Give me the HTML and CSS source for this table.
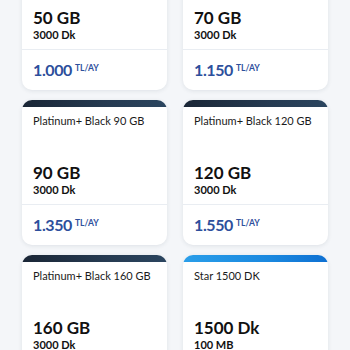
FILE: index.html
```html
<!DOCTYPE html>
<html lang="tr">
<head>
<meta charset="utf-8">
<link rel="stylesheet" href="styles.css">
</head>
<body>
<div class="grid">
  <div class="card">
    <div class="strip dark"></div>
    <div class="body">
      <div class="title">Platinum+ Black 50 GB</div>
      <div class="amounts">
        <div class="main">50 GB</div>
        <div class="sub">3000 Dk</div>
      </div>
    </div>
    <div class="price">1.000<sup>TL/AY</sup></div>
  </div>
  <div class="card">
    <div class="strip dark"></div>
    <div class="body">
      <div class="title">Platinum+ Black 70 GB</div>
      <div class="amounts">
        <div class="main">70 GB</div>
        <div class="sub">3000 Dk</div>
      </div>
    </div>
    <div class="price">1.150<sup>TL/AY</sup></div>
  </div>
  <div class="card">
    <div class="strip dark"></div>
    <div class="body">
      <div class="title">Platinum+ Black 90 GB</div>
      <div class="amounts">
        <div class="main">90 GB</div>
        <div class="sub">3000 Dk</div>
      </div>
    </div>
    <div class="price">1.350<sup>TL/AY</sup></div>
  </div>
  <div class="card">
    <div class="strip dark"></div>
    <div class="body">
      <div class="title">Platinum+ Black 120 GB</div>
      <div class="amounts">
        <div class="main">120 GB</div>
        <div class="sub">3000 Dk</div>
      </div>
    </div>
    <div class="price">1.550<sup>TL/AY</sup></div>
  </div>
  <div class="card">
    <div class="strip dark"></div>
    <div class="body">
      <div class="title">Platinum+ Black 160 GB</div>
      <div class="amounts">
        <div class="main">160 GB</div>
        <div class="sub">3000 Dk</div>
      </div>
    </div>
    <div class="price">1.750<sup>TL/AY</sup></div>
  </div>
  <div class="card">
    <div class="strip blue"></div>
    <div class="body">
      <div class="title">Star 1500 DK</div>
      <div class="amounts">
        <div class="main">1500 Dk</div>
        <div class="sub">100 MB</div>
      </div>
    </div>
    <div class="price">250<sup>TL/AY</sup></div>
  </div>
</div>
</body>
</html>
```
FILE: styles.css
```css
html, body {
  margin: 0;
  padding: 0;
  background: #f4f6f9;
  overflow: hidden;
}
body {
  font-family: Lato, "Open Sans", sans-serif;
  color: #111;
}
.grid {
  display: grid;
  grid-template-columns: 145px 145px;
  column-gap: 16px;
  row-gap: 10px;
  margin: -55px 0 0 22px;
}
.card {
  background: #fff;
  border-radius: 10px;
  box-shadow: 0 1px 4px rgba(30, 45, 70, 0.10);
  height: 145px;
  display: flex;
  flex-direction: column;
  overflow: hidden;
}
.strip {
  height: 7px;
  flex: none;
  border-radius: 10px 10px 0 0;
}
.strip.dark {
  background: linear-gradient(90deg, #1a2636 0%, #263b52 60%, #2b455f 100%);
}
.strip.blue {
  background: linear-gradient(90deg, #2a9ee9 0%, #1a88df 60%, #0e70d2 100%);
}
.body {
  height: 98px;
  box-sizing: border-box;
  padding: 7px 11px 7px;
  display: flex;
  flex-direction: column;
  justify-content: space-between;
  border-bottom: 1px solid #e9edf2;
}
.title {
  font-size: 11px;
  line-height: 14px;
  white-space: nowrap;
  color: #1b1b1b;
}
.main {
  font-size: 17px;
  line-height: 20px;
  font-weight: 700;
}
.sub {
  font-size: 11px;
  line-height: 13.6px;
  font-weight: 700;
}
.price {
  padding: 10px 11px 0;
  font-size: 16px;
  line-height: 20px;
  font-weight: 700;
  letter-spacing: -0.4px;
  color: #2d4f9c;
}
.price sup {
  font-size: 8.5px;
  line-height: 0;
  letter-spacing: 0;
  margin-left: 3px;
  vertical-align: 5px;
}
```
